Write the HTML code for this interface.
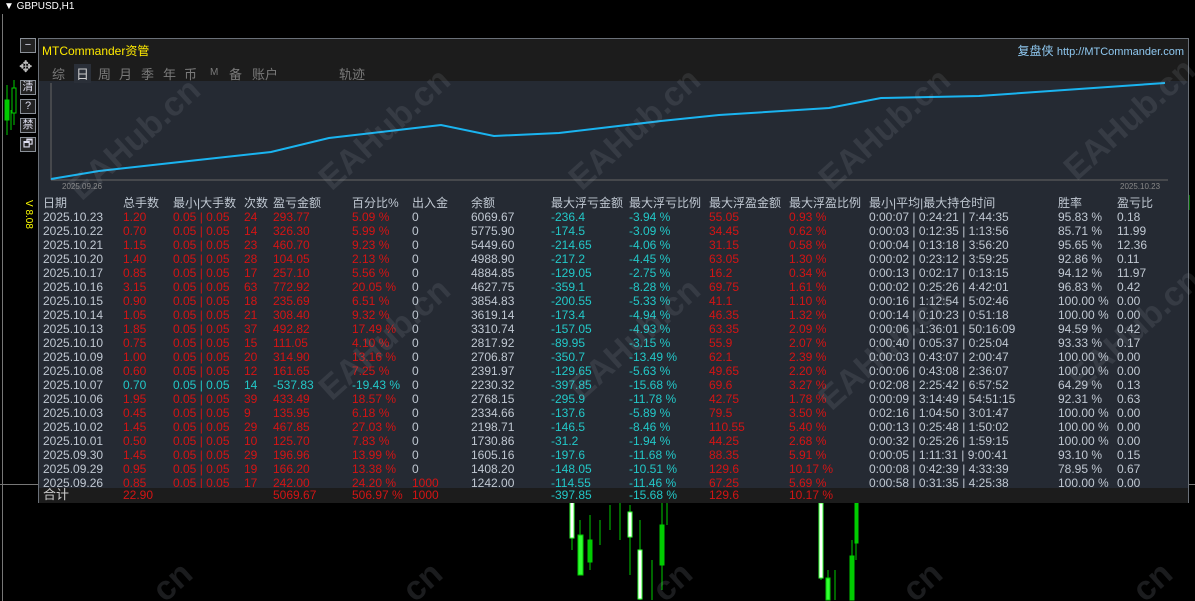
<!DOCTYPE html>
<html><head><meta charset="utf-8">
<style>
*{margin:0;padding:0;box-sizing:border-box}
html,body{width:1195px;height:601px;overflow:hidden;background:#000}
#wrap{width:1195px;height:601px;background:#000;position:relative;overflow:hidden;font-family:"Liberation Sans","Noto Sans CJK SC",sans-serif;}
.a{position:absolute;white-space:nowrap}
#panel{position:absolute;left:38px;top:38px;width:1151px;height:465px;background:#252a33;border:1px solid #6a7078;}
#title{position:absolute;left:0;top:0;width:100%;height:42px;background:#1c1c1c}
.r{position:absolute;left:0;width:100%;height:14px;font-size:12px;line-height:14px;color:#c0c8d2}
.r span{position:absolute;top:0}
.red{color:#d41414!important}.cy{color:#22c8c8!important}
.btn{position:absolute;left:20px;width:16px;height:15px;border:1px solid #8a9098;background:#222;color:#dde;font-size:11px;line-height:13px;text-align:center}
.wm{position:absolute;width:170px;text-align:center;color:rgba(170,175,185,0.13);font-size:34px;font-weight:bold;transform:rotate(-42deg);white-space:nowrap;z-index:5}
.wc{position:absolute;color:rgba(170,175,185,0.16);font-size:34px;font-weight:bold;transform:rotate(-42deg);white-space:nowrap;width:60px;height:34px;line-height:34px}
.tab{position:absolute;top:25px;color:#7a7a7a;font-size:13px}
</style></head><body><div id="wrap">
<div class="a" style="left:4px;top:1px;color:#fff;font-size:10px;">▼ GBPUSD,H1</div>
<div class="a" style="left:2px;top:14px;width:1px;height:587px;background:#777"></div>
<div class="a" style="left:0;top:484px;width:38px;height:1px;background:#777"></div>
<div class="a" style="left:1188px;top:484px;width:7px;height:1px;background:#777"></div>
<svg class="a" style="left:0;top:0" width="1195" height="601">
<g stroke="#0c0" fill="#0c0">
<line x1="7" y1="85" x2="7" y2="135"/><rect x="5" y="100" width="4" height="20"/>
<line x1="11" y1="110" x2="11" y2="130"/><line x1="14" y1="80" x2="14" y2="125"/><rect x="12" y="88" width="4" height="25" fill="#000"/>
<line x1="66" y1="100" x2="66" y2="108"/>
<line x1="572" y1="500" x2="572" y2="550"/><rect x="570" y="502" width="4" height="36" fill="#fff" stroke="#3f3"/>
<line x1="580" y1="520" x2="580" y2="560"/><rect x="578" y="535" width="5" height="40" fill="#3f3"/>
<line x1="590" y1="515" x2="590" y2="570"/><rect x="588" y="540" width="4" height="22"/>
<line x1="600" y1="520" x2="600" y2="545"/><line x1="610" y1="505" x2="610" y2="530"/><line x1="620" y1="503" x2="620" y2="540"/>
<line x1="630" y1="505" x2="630" y2="575"/><rect x="628" y="512" width="4" height="25" fill="#fff" stroke="#3f3"/>
<line x1="640" y1="520" x2="640" y2="600"/><rect x="638" y="550" width="4" height="49" fill="#fff" stroke="#3f3"/>
<line x1="652" y1="560" x2="652" y2="600"/><line x1="662" y1="503" x2="662" y2="590"/><rect x="660" y="525" width="4" height="40"/>
<line x1="667" y1="503" x2="667" y2="525"/>
<line x1="821" y1="503" x2="821" y2="580"/><rect x="819" y="503" width="4" height="75" fill="#fff" stroke="#3f3"/>
<line x1="828" y1="570" x2="828" y2="600"/><rect x="826" y="578" width="4" height="22" fill="#3f3"/>
<line x1="835" y1="570" x2="835" y2="600"/><line x1="852" y1="540" x2="852" y2="600"/><rect x="850" y="556" width="4" height="44"/>
<line x1="856" y1="503" x2="856" y2="560"/><rect x="855" y="503" width="3" height="40"/>
<line x1="1189" y1="195" x2="1189" y2="210"/>
</g>
</svg>
<div class="btn" style="top:38px">−</div>
<div class="a" style="left:19px;top:57px;color:#bbb;font-size:16px">✥</div>
<div class="btn" style="top:80px">清</div>
<div class="btn" style="top:99px">?</div>
<div class="btn" style="top:118px">禁</div>
<div class="btn" style="top:137px">🗗</div>
<div class="a" style="top:200px;color:#ff0;font-size:10px;transform:rotate(90deg);transform-origin:left top;left:34px">V 8.08</div>

<div id="panel">
<div id="title"></div>
<div class="a" style="left:3px;top:3px;color:#ffea00;font-size:12px">MTCommander资管</div>
<div class="a" style="right:4px;top:3px;color:#8fc8f0;font-size:12px">复盘侠 <span style="font-size:11px">http://MTCommander.com</span></div>
<div class="tab" style="left:13px">综</div>
<div class="tab" style="left:35px;color:#ccc;background:#2a2f38;padding:0 2px">日</div>
<div class="tab" style="left:59px">周</div>
<div class="tab" style="left:80px">月</div>
<div class="tab" style="left:102px">季</div>
<div class="tab" style="left:124px">年</div>
<div class="tab" style="left:145px">币</div>
<div class="tab" style="left:171px;font-size:10px;top:28px">M</div>
<div class="tab" style="left:190px">备</div>
<div class="tab" style="left:213px">账户</div>
<div class="tab" style="left:300px">轨迹</div>
<svg class="a" style="left:0;top:40px" width="1151" height="110">
<line x1="12" y1="4" x2="12" y2="101" stroke="#666"/>
<line x1="12" y1="101" x2="1129" y2="101" stroke="#666"/>
<polyline fill="none" stroke="#1ab4f0" stroke-width="2" points="12,100 60,92 150,82 232,73 290,59 402,46 455,57 520,54 622,42 680,36 790,29 842,19 940,17 1040,10 1126,4"/>
</svg>
<div class="a" style="left:23px;top:143px;color:#888;font-size:8px">2025.09.26</div>
<div class="a" style="left:1081px;top:143px;color:#888;font-size:8px">2025.10.23</div>
<div id="tb"></div>
</div>
<div class="wm" style="left:50px;top:120px">EAHub.cn</div>
<div class="wm" style="left:300px;top:110px">EAHub.cn</div>
<div class="wm" style="left:550px;top:110px">EAHub.cn</div>
<div class="wm" style="left:800px;top:110px">EAHub.cn</div>
<div class="wm" style="left:1045px;top:100px">EAHub.cn</div>
<div class="wm" style="left:300px;top:320px">EAHub.cn</div>
<div class="wm" style="left:550px;top:320px">EAHub.cn</div>
<div class="wm" style="left:800px;top:330px">EAHub.cn</div>
<div class="wm" style="left:1050px;top:310px">EAHub.cn</div>
<div class="wc" style="left:150px;top:558px">cn</div>
<div class="wc" style="left:400px;top:558px">cn</div>
<div class="wc" style="left:650px;top:558px">cn</div>
<div class="wc" style="left:900px;top:558px">cn</div>
<div class="wc" style="left:1130px;top:558px">cn</div>
<script>
var X=[4,84,134,205,234,313,373,432,512,590,670,750,830,1019,1078];
var H=["日期","总手数","最小|大手数","次数","盈亏金额","百分比%","出入金","余额","最大浮亏金额","最大浮亏比例","最大浮盈金额","最大浮盈比例","最小|平均|最大持仓时间","胜率","盈亏比"];
var D=[
["2025.10.23","1.20","24","293.77","5.09 %","0","6069.67","-236.4","-3.94 %","55.05","0.93 %","0:00:07 | 0:24:21 | 7:44:35","95.83 %","0.18"],
["2025.10.22","0.70","14","326.30","5.99 %","0","5775.90","-174.5","-3.09 %","34.45","0.62 %","0:00:03 | 0:12:35 | 1:13:56","85.71 %","11.99"],
["2025.10.21","1.15","23","460.70","9.23 %","0","5449.60","-214.65","-4.06 %","31.15","0.58 %","0:00:04 | 0:13:18 | 3:56:20","95.65 %","12.36"],
["2025.10.20","1.40","28","104.05","2.13 %","0","4988.90","-217.2","-4.45 %","63.05","1.30 %","0:00:02 | 0:23:12 | 3:59:25","92.86 %","0.11"],
["2025.10.17","0.85","17","257.10","5.56 %","0","4884.85","-129.05","-2.75 %","16.2","0.34 %","0:00:13 | 0:02:17 | 0:13:15","94.12 %","11.97"],
["2025.10.16","3.15","63","772.92","20.05 %","0","4627.75","-359.1","-8.28 %","69.75","1.61 %","0:00:02 | 0:25:26 | 4:42:01","96.83 %","0.42"],
["2025.10.15","0.90","18","235.69","6.51 %","0","3854.83","-200.55","-5.33 %","41.1","1.10 %","0:00:16 | 1:12:54 | 5:02:46","100.00 %","0.00"],
["2025.10.14","1.05","21","308.40","9.32 %","0","3619.14","-173.4","-4.94 %","46.35","1.32 %","0:00:14 | 0:10:23 | 0:51:18","100.00 %","0.00"],
["2025.10.13","1.85","37","492.82","17.49 %","0","3310.74","-157.05","-4.93 %","63.35","2.09 %","0:00:06 | 1:36:01 | 50:16:09","94.59 %","0.42"],
["2025.10.10","0.75","15","111.05","4.10 %","0","2817.92","-89.95","-3.15 %","55.9","2.07 %","0:00:40 | 0:05:37 | 0:25:04","93.33 %","0.17"],
["2025.10.09","1.00","20","314.90","13.16 %","0","2706.87","-350.7","-13.49 %","62.1","2.39 %","0:00:03 | 0:43:07 | 2:00:47","100.00 %","0.00"],
["2025.10.08","0.60","12","161.65","7.25 %","0","2391.97","-129.65","-5.63 %","49.65","2.20 %","0:00:06 | 0:43:08 | 2:36:07","100.00 %","0.00"],
["2025.10.07","0.70","14","-537.83","-19.43 %","0","2230.32","-397.85","-15.68 %","69.6","3.27 %","0:02:08 | 2:25:42 | 6:57:52","64.29 %","0.13"],
["2025.10.06","1.95","39","433.49","18.57 %","0","2768.15","-295.9","-11.78 %","42.75","1.78 %","0:00:09 | 3:14:49 | 54:51:15","92.31 %","0.63"],
["2025.10.03","0.45","9","135.95","6.18 %","0","2334.66","-137.6","-5.89 %","79.5","3.50 %","0:02:16 | 1:04:50 | 3:01:47","100.00 %","0.00"],
["2025.10.02","1.45","29","467.85","27.03 %","0","2198.71","-146.5","-8.46 %","110.55","5.40 %","0:00:13 | 0:25:48 | 1:50:02","100.00 %","0.00"],
["2025.10.01","0.50","10","125.70","7.83 %","0","1730.86","-31.2","-1.94 %","44.25","2.68 %","0:00:32 | 0:25:26 | 1:59:15","100.00 %","0.00"],
["2025.09.30","1.45","29","196.96","13.99 %","0","1605.16","-197.6","-11.68 %","88.35","5.91 %","0:00:05 | 1:11:31 | 9:00:41","93.10 %","0.15"],
["2025.09.29","0.95","19","166.20","13.38 %","0","1408.20","-148.05","-10.51 %","129.6","10.17 %","0:00:08 | 0:42:39 | 4:33:39","78.95 %","0.67"],
["2025.09.26","0.85","17","242.00","24.20 %","1000","1242.00","-114.55","-11.46 %","67.25","5.69 %","0:00:58 | 0:31:35 | 4:25:38","100.00 %","0.00"]];
var h='<div class="r" style="top:157px;font-size:12px;height:16px">';
H.forEach(function(t,i){h+='<span style="left:'+X[i]+'px">'+t+'</span>'});h+='</div>';
D.forEach(function(d,k){
 var neg=d[0]=="2025.10.07",c=neg?"cy":"red";
 var v=[d[0],d[1],"0.05 | 0.05",d[2],d[3],d[4],d[5],d[6],d[7],d[8],d[9],d[10],d[11],d[12],d[13]];
 var cl=["",c,c,c,c,c,d[5]=="1000"?"red":"","","cy","cy","red","red","","",""];
 h+='<div class="r" style="top:'+(171+k*14)+'px">';
 v.forEach(function(t,i){h+='<span class="'+cl[i]+'" style="left:'+X[i]+'px">'+t+'</span>'});
 h+='</div>';
});
h+='<div class="r" style="top:449px;height:15px;background:#1c1c1c"><span style="left:4px;font-size:13px;color:#ccc">合计</span><span class="red" style="left:84px">22.90</span><span class="red" style="left:234px">5069.67</span><span class="red" style="left:313px">506.97 %</span><span class="red" style="left:373px">1000</span><span class="cy" style="left:512px">-397.85</span><span class="cy" style="left:590px">-15.68 %</span><span class="red" style="left:670px">129.6</span><span class="red" style="left:750px">10.17 %</span></div>';
document.getElementById('tb').innerHTML=h;
</script>
</div></body></html>
